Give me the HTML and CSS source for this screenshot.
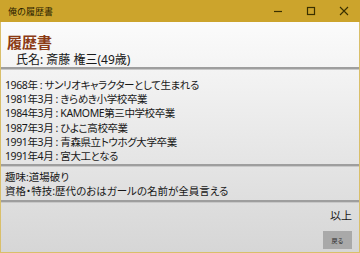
FILE: index.html
```html
<!DOCTYPE html>
<html>
<head>
    <title>俺の履歴書</title>
    <link rel="stylesheet" href="styles.css">
</head>
<body>

    <div class="window">
        <div class="titlebar">
            <span class="title">俺の履歴書</span>
            <div class="controls">
                <span class="ctl"><svg width="10" height="10" viewBox="0 0 10 10"><path d="M1 5.5h8" stroke="#3a3000" stroke-width="1.2"/></svg></span>
                <span class="ctl"><svg width="10" height="10" viewBox="0 0 10 10"><rect x="1.5" y="1.5" width="7" height="7" fill="none" stroke="#3a3000" stroke-width="1.2"/></svg></span>
                <span class="ctl"><svg width="10" height="10" viewBox="0 0 10 10"><path d="M1 1l8 8M9 1l-8 8" stroke="#3a3000" stroke-width="1.1"/></svg></span>
            </div>
        </div>

        <div class="section header">
            <div class="heading">履歴書</div>
            <div class="name">氏名: 斎藤 権三(49歳)</div>
        </div>

        <div class="section history">
            <div>1968年 : サンリオキャラクターとして生まれる</div>
            <div>1981年3月 : きらめき小学校卒業</div>
            <div>1984年3月 : KAMOME第三中学校卒業</div>
            <div>1987年3月 : ひよこ高校卒業</div>
            <div>1991年3月 : 青森県立トウホグ大学卒業</div>
            <div>1991年4月 : 宮大工となる</div>
        </div>

        <div class="section extra">
            <div>趣味:道場破り</div>
            <div>資格・特技:歴代のおはガールの名前が全員言える</div>
        </div>

        <div class="section footer">
            <div class="end">以上</div>
            <button class="back">戻る</button>
        </div>
    </div>

</body>
</html>
```
FILE: styles.css
```css
body, html {
    height: 100%;
    margin: 0;
    font-family: "Noto Sans", "Noto Sans CJK JP", sans-serif;
    color: #181818;
}

.window {
    height: 253px;
    box-sizing: border-box;
    border: 1px solid #d9bf6a;
    border-top: none;
    display: flex;
    flex-direction: column;
    background: linear-gradient(#ffffff, #d6d6d6);
}

.titlebar {
    height: 22px;
    margin: 0 -1px;
    background: #cca42c;
    display: flex;
    align-items: center;
    padding-left: 8px;
}

.title {
    font-size: 9px;
    color: #2a2200;
    flex: 1;
}

.controls {
    display: flex;
}

.ctl {
    width: 33px;
    height: 22px;
    display: flex;
    align-items: center;
    justify-content: center;
}

.section {
    border-bottom: 2px solid #9e9e9e;
    box-shadow: 0 1px 0 #c8c8c8;
    font-feature-settings: "palt";
}

.header {
    height: 47px;
    padding-left: 6px;
    box-sizing: border-box;
    padding-top: 11px;
}

.heading {
    font-size: 15px;
    line-height: 18px;
    color: #8b3a14;
    font-weight: bold;
}

.name {
    font-size: 12px;
    line-height: 17px;
    padding-left: 9px;
}

.history {
    height: 97px;
    box-sizing: border-box;
    padding: 9px 0 0 4px;
    font-size: 10.5px;
    line-height: 14.2px;
    letter-spacing: -0.4px;
}

.extra {
    height: 36px;
    box-sizing: border-box;
    padding: 4px 0 0 4px;
    font-size: 10.5px;
    line-height: 14px;
}

.footer {
    flex: 1;
    border-bottom: none;
    box-shadow: none;
    display: flex;
    flex-direction: column;
    align-items: flex-end;
    padding-right: 7px;
}

.end {
    font-size: 11px;
    line-height: 14px;
    margin-top: 7px;
}

.back {
    margin-top: 8px;
    width: 29px;
    height: 18px;
    border: none;
    background: #a9a9a9;
    font-size: 6px;
    color: #2a2a2a;
    padding: 0;
    font-family: inherit;
}
```
